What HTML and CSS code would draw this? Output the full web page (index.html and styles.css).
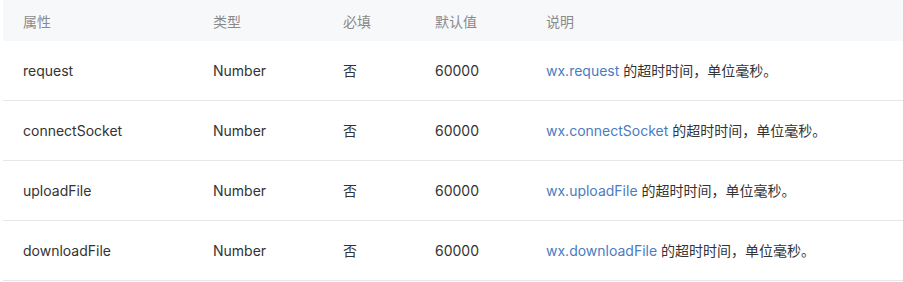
FILE: index.html
```html
<!DOCTYPE html>
<html>
<head>
<meta charset="utf-8">
<link rel="stylesheet" href="styles.css">
</head>
<body>
<table class="tbl">
  <colgroup>
    <col class="c1"><col class="c2"><col class="c3"><col class="c4"><col class="c5">
  </colgroup>
  <thead>
    <tr><th>属性</th><th>类型</th><th>必填</th><th>默认值</th><th>说明</th></tr>
  </thead>
  <tbody>
    <tr><td>request</td><td>Number</td><td>否</td><td>60000</td><td><a class="lnk">wx.request</a> 的超时时间，单位毫秒。</td></tr>
    <tr><td>connectSocket</td><td>Number</td><td>否</td><td>60000</td><td><a class="lnk">wx.connectSocket</a> 的超时时间，单位毫秒。</td></tr>
    <tr><td>uploadFile</td><td>Number</td><td>否</td><td>60000</td><td><a class="lnk">wx.uploadFile</a> 的超时时间，单位毫秒。</td></tr>
    <tr><td>downloadFile</td><td>Number</td><td>否</td><td>60000</td><td><a class="lnk">wx.downloadFile</a> 的超时时间，单位毫秒。</td></tr>
  </tbody>
</table>
</body>
</html>
```
FILE: styles.css
```css
html, body { margin: 0; padding: 0; background: #fff; }
body { padding-left: 3px; font-family: "Inter", "Noto Sans CJK SC", sans-serif; font-size: 14px; color: #333; }
.tbl { border-collapse: collapse; table-layout: fixed; width: 900px; }
.c1 { width: 190px; }
.c2 { width: 130px; }
.c3 { width: 92px; }
.c4 { width: 111px; }
.c5 { width: 377px; }
.tbl th { height: 41px; padding: 0 0 0 20px; background: #f7f8fa; color: #8a8a8a; font-weight: normal; text-align: left; vertical-align: middle; }
.tbl td { height: 59px; padding: 0 0 0 20px; border-bottom: 1px solid #e7e7eb; vertical-align: middle; line-height: 20px; }
.lnk { color: #4a7cbf; text-decoration: none; }
```
